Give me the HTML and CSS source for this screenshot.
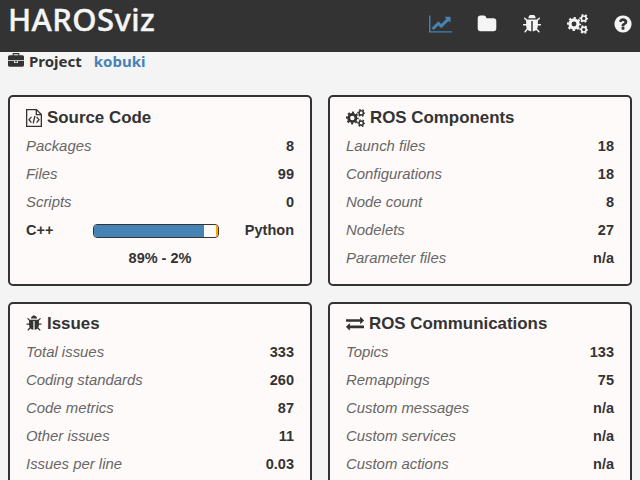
FILE: index.html
```
<!DOCTYPE html>
<html lang="en">
<head>
<meta charset="utf-8">
<title>HAROSviz</title>
<link rel="stylesheet" href="styles.css">
</head>
<body>
<svg class="sprite" aria-hidden="true">
  <symbol id="chart" viewBox="0 0 2048 1792"><path d="M2048 1536v128h-2048v-1536h128v1408h1920zM1920 288v435q0 21-19.500 29.500t-35.500-7.500l-121-121-633 633q-10 10-23 10t-23-10l-233-233-416 416-192-192 585-585q10-10 23-10t23 10l233 233 464-464-121-121q-16-16-7.500-35.500t29.500-19.500h435q14 0 23 9t9 23z"/></symbol>
  <symbol id="folder" viewBox="0 0 1792 1792"><path d="M1728 608v704q0 92-66 158t-158 66h-1216q-92 0-158-66t-66-158v-960q0-92 66-158t158-66h320q92 0 158 66t66 158v32h672q92 0 158 66t66 158z"/></symbol>
  <symbol id="bug" viewBox="64 64 1664 1664"><path d="M1696 960q0 26-19 45t-45 19h-224q0 171-67 290l208 209q19 19 19 45t-19 45q-18 19-45 19t-45-19l-198-197q-5 5-15 13t-42 28.500-65 36.500-82 29-97 13v-896h-128v896q-51 0-101.500-13.500t-87-33-66-39-43.500-32.500l-15-14-183 207q-20 21-48 21-24 0-43-16-19-18-20.500-44.500t15.500-46.500l202-227q-58-114-58-274h-224q-26 0-45-19t-19-45 19-45 45-19h224v-294l-173-173q-19-19-19-45t19-45 45-19 45 19l173 173h844l173-173q19-19 45-19t45 19 19 45-19 45l-173 173v294h224q26 0 45 19t19 45zm-480-576h-640q0-133 93.500-226.500t226.500-93.500 226.500 93.500 93.500 226.500z"/></symbol>
  <symbol id="cogs" viewBox="0 0 1920 1792">
    <g fill="none" stroke="currentColor">
      <circle cx="640" cy="896" r="370" stroke-width="290"/>
      <circle cx="640" cy="896" r="560" stroke-width="180" pathLength="80" stroke-dasharray="4.800 5.200" stroke-dashoffset="2.400"/>
      <circle cx="1536" cy="384" r="220" stroke-width="150"/>
      <circle cx="1536" cy="384" r="335" stroke-width="130" pathLength="60" stroke-dasharray="5 5" stroke-dashoffset="2.500"/>
      <circle cx="1536" cy="1408" r="220" stroke-width="150"/>
      <circle cx="1536" cy="1408" r="335" stroke-width="130" pathLength="60" stroke-dasharray="5 5" stroke-dashoffset="2.500"/>
    </g>
  </symbol>
  <symbol id="help" viewBox="0 0 1792 1792"><path d="M1024 1376v-192q0-14-9-23t-23-9h-192q-14 0-23 9t-9 23v192q0 14 9 23t23 9h192q14 0 23-9t9-23zm256-672q0-88-55.500-163t-138.500-116-170-41q-243 0-371 213-15 24 8 42l132 100q7 6 19 6 16 0 25-12 53-68 86-92 34-24 86-24 48 0 85.500 26t37.500 59q0 38-20 61t-68 45q-63 28-115.500 86.500t-52.500 125.500v36q0 14 9 23t23 9h192q14 0 23-9t9-23q0-19 21.500-49.500t54.500-49.500q32-18 49-28.500t46-35 44.500-48 28-60.500 12.500-81zm384 192q0 209-103 385.500t-279.500 279.500-385.500 103-385.500-103-279.500-279.500-103-385.500 103-385.500 279.500-279.500 385.500-103 385.500 103 279.500 279.500 103 385.500z"/></symbol>
  <symbol id="briefcase" viewBox="0 0 1792 1792"><path d="M640 256h512v-128h-512v128zm1152 640v480q0 66-47 113t-113 47h-1472q-66 0-113-47t-47-113v-480h672v160q0 26 19 45t45 19h320q26 0 45-19t19-45v-160h672zm-768 0v128h-256v-128h256zm768-480v384h-1792v-384q0-66 47-113t113-47h352v-160q0-40 28-68t68-28h576q40 0 68 28t28 68v160h352q66 0 113 47t47 113z"/></symbol>
  <symbol id="exchange" viewBox="0 0 1792 1792"><path d="M1792 1184v192q0 13-9.500 22.500t-22.500 9.500h-1376v192q0 13-9.500 22.500t-22.500 9.500q-12 0-24-10l-319-320q-9-9-9-22 0-14 9-23l320-320q9-9 23-9 13 0 22.500 9.500t9.500 22.500v192h1376q13 0 22.500 9.500t9.500 22.500zm0-544q0 14-9 23l-320 320q-9 9-23 9-13 0-22.500-9.500t-9.500-22.500v-192h-1376q-13 0-22.500-9.500t-9.500-22.500v-192q0-13 9.500-22.500t22.500-9.500h1376v-192q0-14 9-23t23-9q12 0 24 10l319 319q9 9 9 23z"/></symbol>
  <symbol id="code" viewBox="0 0 16 18"><path fill="none" stroke="currentColor" stroke-width="1.300" d="M.65.65H10.500L15.350 5.500V17.350H.65zM10.300.8V5.700H15.200M5.400 7.800L3 10.700l2.400 2.900M10.600 7.800l2.400 2.900-2.400 2.900M8.900 7L7.200 14.300"/></symbol>
</svg>

<header class="topbar">
  <h1 class="brand">HAROSviz</h1>
  <nav class="nav">
    <a class="active"><svg class="nav-wide"><use href="#chart"/></svg></a>
    <a><svg><use href="#folder"/></svg></a>
    <a><svg class="nav-bug"><use href="#bug"/></svg></a>
    <a><svg class="nav-cogs"><use href="#cogs"/></svg></a>
    <a><svg><use href="#help"/></svg></a>
  </nav>
</header>

<div class="project">
  <svg><use href="#briefcase"/></svg>
  <span class="project-label">Project</span>
  <span class="project-name">kobuki</span>
</div>

<main class="grid">
  <section class="card upper">
    <h2><svg class="i-code"><use href="#code"/></svg>Source Code</h2>
    <div class="row"><i>Packages</i><b>8</b></div>
    <div class="row"><i>Files</i><b>99</b></div>
    <div class="row"><i>Scripts</i><b>0</b></div>
    <div class="row langs"><b>C++</b><div class="bar"><span class="cpp"></span><span class="py"></span></div><b class="right">Python</b></div>
    <div class="row center"><b>89% - 2%</b></div>
  </section>
  <section class="card upper">
    <h2><svg class="i-cogs"><use href="#cogs"/></svg>ROS Components</h2>
    <div class="row"><i>Launch files</i><b>18</b></div>
    <div class="row"><i>Configurations</i><b>18</b></div>
    <div class="row"><i>Node count</i><b>8</b></div>
    <div class="row"><i>Nodelets</i><b>27</b></div>
    <div class="row"><i>Parameter files</i><b>n/a</b></div>
  </section>
  <section class="card">
    <h2><svg class="i-bug"><use href="#bug"/></svg>Issues</h2>
    <div class="row"><i>Total issues</i><b>333</b></div>
    <div class="row"><i>Coding standards</i><b>260</b></div>
    <div class="row"><i>Code metrics</i><b>87</b></div>
    <div class="row"><i>Other issues</i><b>11</b></div>
    <div class="row"><i>Issues per line</i><b>0.03</b></div>
  </section>
  <section class="card">
    <h2><svg class="i-exchange"><use href="#exchange"/></svg>ROS Communications</h2>
    <div class="row"><i>Topics</i><b>133</b></div>
    <div class="row"><i>Remappings</i><b>75</b></div>
    <div class="row"><i>Custom messages</i><b>n/a</b></div>
    <div class="row"><i>Custom services</i><b>n/a</b></div>
    <div class="row"><i>Custom actions</i><b>n/a</b></div>
  </section>
</main>
</body>
</html>
```
FILE: styles.css
```
* { box-sizing: border-box; }
html, body { height: 100%; overflow: hidden; }
body {
  margin: 0;
  background: #f4f4f4;
  color: #333;
  font-family: "Liberation Sans", Arial, sans-serif;
}
svg { fill: currentColor; flex: none; display: block; }
.sprite { display: none; }

.topbar {
  height: 52px;
  padding: 0 7px 0 8px;
  display: flex;
  justify-content: space-between;
  background: #333;
  color: #f5f5f5;
}
.brand {
  margin: 0;
  font: 500 31px/38px "Noto Sans", sans-serif;
  letter-spacing: 0.4px;
  -webkit-text-stroke: 0.4px #f5f5f5;
}
.nav { display: flex; gap: 25px; padding-top: 14px; }
.nav svg { width: 20px; height: 20px; }
.nav .nav-wide { width: 23px; }
.nav .nav-cogs { width: 21px; }
.nav .nav-bug { padding: 0.5px; }
.nav .active { color: steelblue; }

.project {
  height: 43px;
  padding-left: 8px;
  display: flex;
  align-items: flex-start;
  font: 700 15px/18px "Noto Sans", sans-serif;
}
.project svg { width: 16px; height: 16px; margin-top: 1px; }
.project-label { margin-left: 5px; }
.project-name { margin-left: 12px; color: steelblue; }

.grid {
  display: grid;
  grid-template-columns: 1fr 1fr;
  gap: 16px;
  padding: 0 8px;
}
.card {
  height: 191px;
  padding: 9px 16px;
  border: 2px solid #333;
  border-radius: 5px;
  background: #fffafa;
}
.card.upper { padding-top: 10px; }
.card h2 {
  margin: 0;
  height: 25px;
  padding-bottom: 3px;
  display: flex;
  align-items: center;
  gap: 5px;
  font-size: 16.900px;
  line-height: 22px;
}
.card h2 svg { width: 18px; height: 18px; margin-top: -1px; }
.card h2 .i-code { width: 16px; }
.card h2 .i-cogs { width: 19px; }
.card h2 .i-bug { width: 16px; height: 17px; margin-top: -2px; }
.card h2 .i-exchange { margin-top: -2px; }
.row {
  height: 28px;
  display: flex;
  align-items: baseline;
  justify-content: space-between;
  line-height: 28px;
}
.row i { font-size: 14.900px; color: #666; }
.row b { font-size: 14.500px; }
.row.center { justify-content: center; }
.row.langs {
  display: grid;
  grid-template-columns: 67px 126px 1fr;
  align-items: center;
}
.right { text-align: right; }
.bar {
  height: 14px;
  display: flex;
  justify-content: space-between;
  margin-top: 1px;
  border: 1px solid #333;
  border-radius: 4px;
  overflow: hidden;
  background: #fffafa;
}
.cpp { width: 89%; background: steelblue; }
.py { width: 2%; background: orange; }
```
